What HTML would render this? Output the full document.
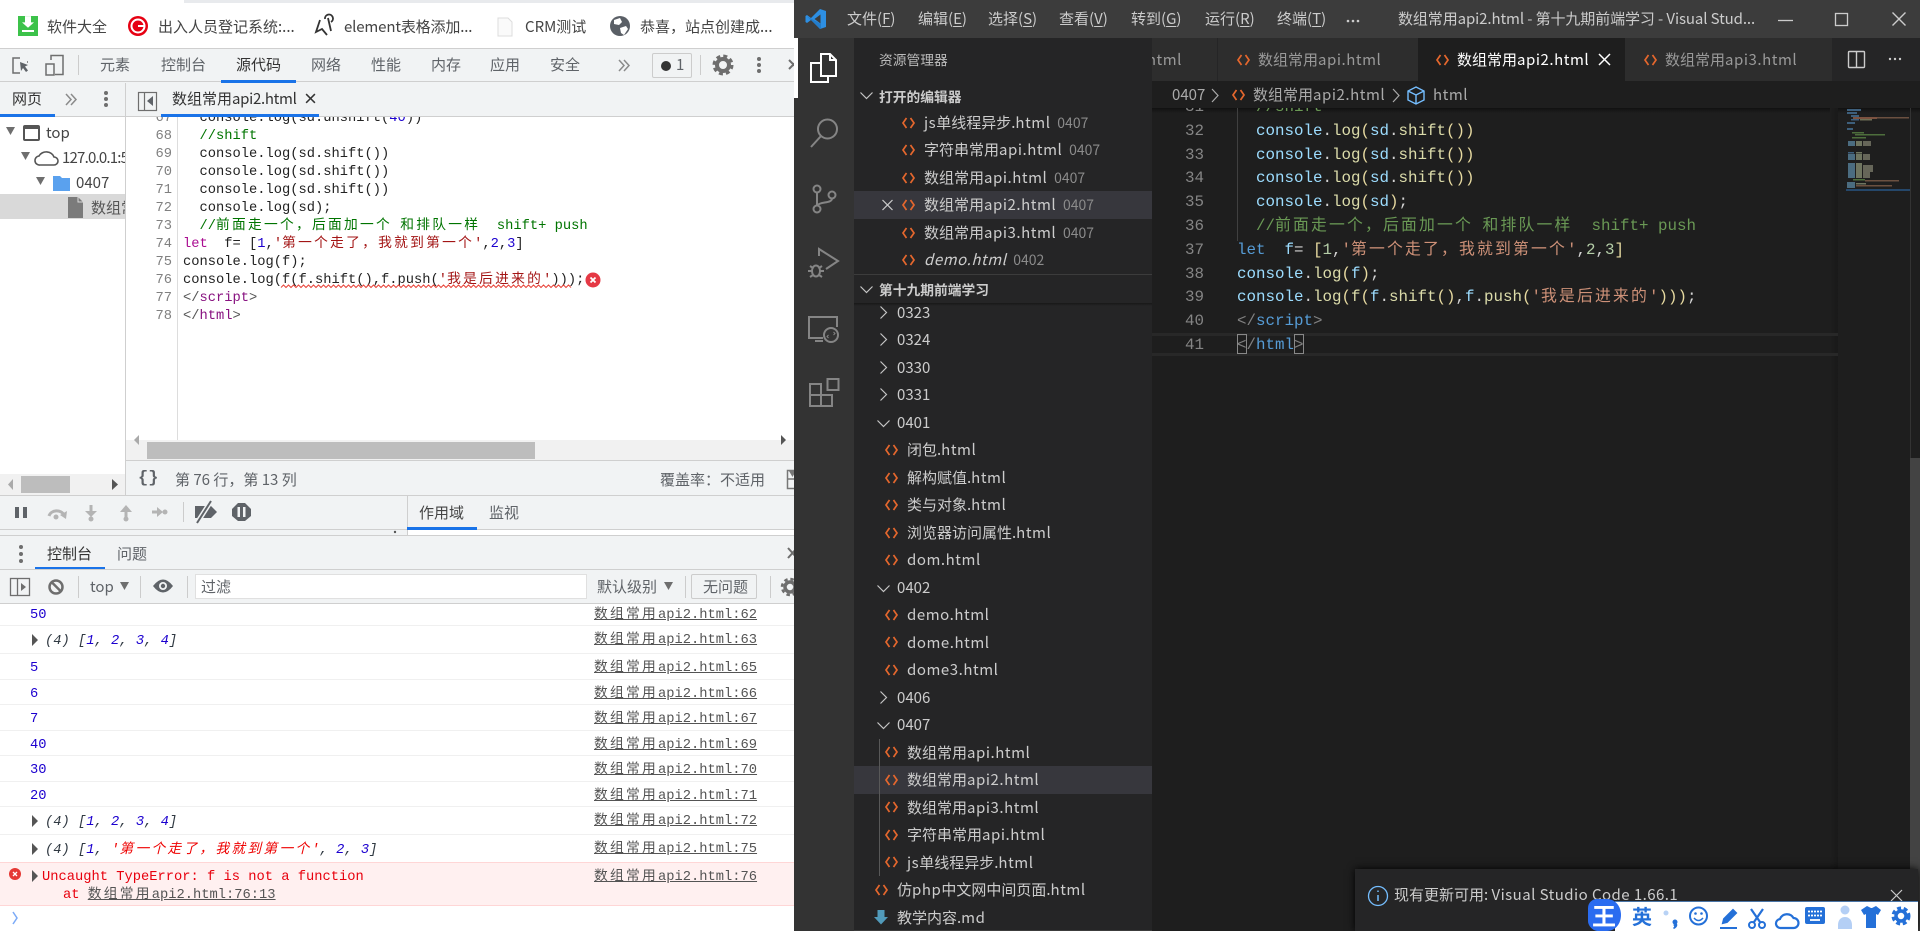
<!DOCTYPE html>
<html lang="zh"><head><meta charset="utf-8"><title>VS Code</title>
<style>
html,body{margin:0;padding:0;width:1920px;height:931px;overflow:hidden;background:#fff}
body{position:relative;font-family:"Liberation Sans","Noto Sans CJK SC",sans-serif;font-size:15px}
div,span.a{position:absolute}
.b{position:absolute}
.t{position:absolute;white-space:pre;line-height:20px;font-family:"Noto Sans CJK SC","Liberation Sans",sans-serif;font-size:15px;color:#5f6368}
.k{color:#444}
#ch{left:0;top:0;width:794px;height:931px;overflow:hidden;background:#fff}
#vs{left:0;top:0;width:1920px;height:931px;overflow:hidden}
.m{position:absolute;white-space:pre;font-family:"Liberation Mono","Noto Sans CJK SC",monospace;font-size:13.75px;line-height:18px;height:18px;color:#222;transform:translateY(2px)}
.m i{font-style:normal;letter-spacing:2.25px}
.cm{color:#007400}.kw{color:#aa0d91}.st{color:#a31515}.nu{color:#1c00cf}.tg{color:#881280}.br{color:#555}
.ln{color:#808080;width:40px;left:132px;text-align:right}
.n{color:#1c00cf}
.it{font-style:italic;color:#303942}
.it i{font-style:italic}
.lk{left:594px;color:#545454;text-decoration:underline}
.rl{position:absolute;left:0;width:794px;height:1px;background:#f0f0f0}
.s{position:absolute;white-space:pre;line-height:20px;font-family:"Noto Sans CJK SC","Liberation Sans",sans-serif;font-size:15px;color:#ccc}
.s b{font-weight:400;letter-spacing:.55px}
.g{color:#8b8b8b;font-size:14px}
.e{position:absolute;white-space:pre;font-family:"Liberation Mono","Noto Sans CJK SC",monospace;font-size:15.83px;line-height:24px;height:24px;color:#d4d4d4;transform:translateY(1px)}
.e i{font-style:normal;letter-spacing:2.17px}
.v{color:#9cdcfe}.f{color:#dcdcaa}.p{color:#e6d9a0}.c{color:#6a9955}.q{color:#ce9178}.w{color:#569cd6}.d{color:#b5cea8}.h{color:#808080}
.en{width:40px;left:1164px;text-align:right;color:#858585}
u{text-underline-offset:2px}
</style></head><body>

<div id="ch">
<div style="left:184px;top:0;width:610px;height:3px;background:#e8eaed"></div>
<div style="left:0;top:48px;width:794px;height:34px;background:#f1f3f4;border-top:1px solid #cfcfcf;border-bottom:1px solid #cfcfcf;box-sizing:border-box"></div>
<div style="left:0;top:82px;width:794px;height:35px;background:#f1f3f4;border-bottom:1px solid #cfcfcf;box-sizing:border-box"></div>

<span class="t k" style="left:47px;top:17px">软件大全</span>
<span class="t k" style="left:158px;top:17px">出入人员登记系统:...</span>
<span class="t k" style="left:344px;top:17px;letter-spacing:-.15px">element表格添加...</span>
<span class="t k" style="left:525px;top:17px">CRM测试</span>
<span class="t k" style="left:640px;top:17px">恭喜，站点创建成...</span>

<span class="t" style="left:100px;top:55px">元素</span>
<span class="t" style="left:161px;top:55px">控制台</span>
<span class="t" style="left:236px;top:55px;color:#333">源代码</span>
<span class="t" style="left:311px;top:55px">网络</span>
<span class="t" style="left:371px;top:55px">性能</span>
<span class="t" style="left:431px;top:55px">内存</span>
<span class="t" style="left:490px;top:55px">应用</span>
<span class="t" style="left:550px;top:55px">安全</span>
<div style="left:221px;top:80px;width:75px;height:3px;background:#1a73e8"></div>
<div style="left:652px;top:53px;width:40px;height:25px;border:1px solid #ccc;border-radius:2px;box-sizing:border-box"></div>
<span class="t" style="left:676px;top:55px">1</span>

<span class="t" style="left:12px;top:89px;color:#333">网页</span>
<div style="left:0;top:114px;width:55px;height:3px;background:#1a73e8"></div>
<span class="t" style="left:172px;top:89px;color:#333">数组常用<span style="letter-spacing:-.3px">api2.html</span></span>
<span class="t" style="left:303px;top:89px;color:#333;font-weight:700">×</span>
<div style="left:161px;top:114px;width:158px;height:3px;background:#1a73e8"></div>

<div style="left:125px;top:83px;width:1px;height:412px;background:#cfcfcf"></div>
<div style="left:177px;top:117px;width:1px;height:323px;background:#ddd"></div>
<div style="left:0;top:194px;width:125px;height:25px;background:#d9d9d9"></div>
<div style="left:0;top:117px;width:125px;height:140px;overflow:hidden">
<span class="t" style="left:46px;top:6px;color:#444">top</span>
<span class="t" style="left:62px;top:31px;color:#444;letter-spacing:-.8px">127.0.0.1:5500</span>
<span class="t" style="left:76px;top:56px;color:#444">0407</span>
<span class="t" style="left:91px;top:81px;color:#555">数组常用api2.html</span>
</div>

<div style="left:126px;top:117px;width:668px;height:323px;overflow:hidden">
<div class="m ln" style="left:6px;top:-9px">67</div>
<div class="m ln" style="left:6px;top:9px">68</div>
<div class="m ln" style="left:6px;top:27px">69</div>
<div class="m ln" style="left:6px;top:45px">70</div>
<div class="m ln" style="left:6px;top:63px">71</div>
<div class="m ln" style="left:6px;top:81px">72</div>
<div class="m ln" style="left:6px;top:99px">73</div>
<div class="m ln" style="left:6px;top:117px">74</div>
<div class="m ln" style="left:6px;top:135px">75</div>
<div class="m ln" style="left:6px;top:153px">76</div>
<div class="m ln" style="left:6px;top:171px">77</div>
<div class="m ln" style="left:6px;top:189px">78</div>
<div class="m" style="left:57px;top:-9px">  console.log(sd.unshift(<span class="nu">40</span>))</div>
<div class="m cm" style="left:57px;top:9px">  //shift</div>
<div class="m" style="left:57px;top:27px">  console.log(sd.shift())</div>
<div class="m" style="left:57px;top:45px">  console.log(sd.shift())</div>
<div class="m" style="left:57px;top:63px">  console.log(sd.shift())</div>
<div class="m" style="left:57px;top:81px">  console.log(sd);</div>
<div class="m cm" style="left:57px;top:99px">  //<i>前面走一个，后面加一个</i> <i>和排队一样</i>  shift+ push</div>
<div class="m" style="left:57px;top:117px"><span class="kw">let</span>  f= [<span class="nu">1</span>,<span class="st">'<i>第一个走了，我就到第一个</i>'</span>,<span class="nu">2</span>,<span class="nu">3</span>]</div>
<div class="m" style="left:57px;top:135px">console.log(f);</div>
<div class="m" style="left:57px;top:153px">console.log(f(f.shift(),f.push(<span class="st">'<i>我是后进来的</i>'</span>)));</div>
<div class="m" style="left:57px;top:171px"><span class="br">&lt;/</span><span class="tg">script</span><span class="br">&gt;</span></div>
<div class="m" style="left:57px;top:189px"><span class="br">&lt;/</span><span class="tg">html</span><span class="br">&gt;</span></div>
</div>

<div style="left:126px;top:440px;width:668px;height:21px;background:#f1f1f1;border-bottom:1px solid #cfcfcf;box-sizing:border-box"></div>
<div style="left:147px;top:442px;width:388px;height:17px;background:#bdbdbd"></div>
<div style="left:0;top:474px;width:125px;height:21px;background:#f1f1f1"></div>
<div style="left:21px;top:476px;width:49px;height:17px;background:#bdbdbd"></div>
<div style="left:126px;top:461px;width:668px;height:34px;background:#f1f3f4"></div>
<span class="t" style="left:138px;top:469px;font-family:'Liberation Mono',monospace;font-weight:700;font-size:17px">{}</span>
<span class="t" style="left:175px;top:470px">第 76 行，第 13 列</span>
<span class="t" style="left:660px;top:470px">覆盖率：不适用</span>
<div style="left:0;top:495px;width:794px;height:1px;background:#cfcfcf"></div>

<div style="left:0;top:496px;width:407px;height:40px;background:#f1f3f4"></div>
<div style="left:407px;top:496px;width:387px;height:33px;background:#f1f3f4"></div>
<div style="left:0;top:529px;width:794px;height:1px;background:#cfcfcf"></div>
<div style="left:407px;top:496px;width:1px;height:40px;background:#cfcfcf"></div>
<div style="left:408px;top:530px;width:386px;height:5px;background:#fff"></div>
<div style="left:0;top:535px;width:794px;height:1px;background:#cfcfcf"></div>
<span class="t" style="left:419px;top:503px;color:#444">作用域</span>
<span class="t" style="left:489px;top:503px">监视</span>
<div style="left:407px;top:527px;width:70px;height:3px;background:#1a73e8"></div>

<div style="left:0;top:536px;width:794px;height:33px;background:#f1f3f4"></div>
<div style="left:0;top:569px;width:794px;height:1px;background:#cfcfcf"></div>
<span class="t" style="left:47px;top:544px;color:#333">控制台</span>
<span class="t" style="left:117px;top:544px">问题</span>
<div style="left:35px;top:567px;width:70px;height:2px;background:#1a73e8"></div>
<div style="left:0;top:570px;width:794px;height:33px;background:#f1f3f4"></div>
<div style="left:0;top:603px;width:794px;height:1px;background:#cfcfcf"></div>
<div style="left:195px;top:574px;width:392px;height:25px;background:#fff;border:1px solid #e0e0e0;box-sizing:border-box"></div>
<span class="t" style="left:201px;top:577px">过滤</span>
<span class="t" style="left:90px;top:577px">top</span>
<span class="t" style="left:597px;top:577px">默认级别</span>
<div style="left:691px;top:574px;width:66px;height:25px;border:1px solid #ccc;border-radius:2px;box-sizing:border-box"></div>
<span class="t" style="left:703px;top:577px">无问题</span>

<div class="rl" style="top:625px"></div><div class="rl" style="top:653px"></div><div class="rl" style="top:679px"></div><div class="rl" style="top:704px"></div><div class="rl" style="top:730px"></div><div class="rl" style="top:755px"></div><div class="rl" style="top:781px"></div><div class="rl" style="top:806px"></div><div class="rl" style="top:834px"></div>
<div class="m n" style="left:30px;top:605px">50</div>
<div class="m it" style="left:45px;top:631px">(4) [<span class="n">1</span>, <span class="n">2</span>, <span class="n">3</span>, <span class="n">4</span>]</div>
<div class="m n" style="left:30px;top:658px">5</div>
<div class="m n" style="left:30px;top:684px">6</div>
<div class="m n" style="left:30px;top:709px">7</div>
<div class="m n" style="left:30px;top:735px">40</div>
<div class="m n" style="left:30px;top:760px">30</div>
<div class="m n" style="left:30px;top:786px">20</div>
<div class="m it" style="left:45px;top:812px">(4) [<span class="n">1</span>, <span class="n">2</span>, <span class="n">3</span>, <span class="n">4</span>]</div>
<div class="m it" style="left:45px;top:840px">(4) [<span class="n">1</span>, <span style="color:#e00">'<i>第一个走了，我就到第一个</i>'</span>, <span class="n">2</span>, <span class="n">3</span>]</div>
<div style="left:0;top:862px;width:794px;height:44px;background:#fff0f0;border-top:1px solid #ffd6d6;border-bottom:1px solid #ffd6d6;box-sizing:border-box"></div>
<div class="m" style="left:42px;top:867px;color:#e8000d">Uncaught TypeError: f is not a function</div>
<div class="m" style="left:63px;top:885px;color:#e8000d">at <span style="color:#545454;text-decoration:underline"><i>数组常用</i>api2.html:76:13</span></div>
<div class="m lk" style="top:605px"><i>数组常用</i>api2.html:62</div>
<div class="m lk" style="top:630px"><i>数组常用</i>api2.html:63</div>
<div class="m lk" style="top:658px"><i>数组常用</i>api2.html:65</div>
<div class="m lk" style="top:684px"><i>数组常用</i>api2.html:66</div>
<div class="m lk" style="top:709px"><i>数组常用</i>api2.html:67</div>
<div class="m lk" style="top:735px"><i>数组常用</i>api2.html:69</div>
<div class="m lk" style="top:760px"><i>数组常用</i>api2.html:70</div>
<div class="m lk" style="top:786px"><i>数组常用</i>api2.html:71</div>
<div class="m lk" style="top:811px"><i>数组常用</i>api2.html:72</div>
<div class="m lk" style="top:839px"><i>数组常用</i>api2.html:75</div>
<div class="m lk" style="top:867px"><i>数组常用</i>api2.html:76</div>

<svg class="b" style="left:0;top:0" width="794" height="931" fill="none">
<rect x="18" y="16" width="20" height="20" fill="#3cc24a"/><path d="M25 19h6v7h3l-6 6-6-6h3z" fill="#fff" transform="translate(0 -1) scale(1 .9)"/><rect x="22" y="30" width="12" height="2" fill="#fff"/>
<circle cx="138" cy="26" r="10" fill="#e60012"/><circle cx="138" cy="26" r="6.500" stroke="#fff" stroke-width="2"/><path d="M138 26h6" stroke="#fff" stroke-width="2"/>
<path d="M320 20l-4 12 6-3 5 6M328 18l3 13M325 19a4 4 0 1 1 6 3" stroke="#333" stroke-width="1.800"/>
<path d="M498 18h10l4 4v14h-14z" fill="#fafafa" stroke="#ddd"/>
<circle cx="620" cy="26" r="10" fill="#5a5f66"/><path d="M614 20l6-2 2 4-3 3-5-1zM620 28l6-2 2 3-4 6-3-2z" fill="#fff"/>
<path d="M20 58h-7v15h7" stroke="#6e6e6e" stroke-width="1.500"/><path d="M28 62h-1" stroke="#6e6e6e" stroke-width="1.500"/><path d="M20 62l8 3-3 1.500 3 4-2 1.500-3-4-2 3z" fill="#5f6368"/>
<rect x="46" y="64" width="8" height="11" stroke="#6e6e6e" stroke-width="1.500"/><path d="M51 60v-4.500h12v19h-8" stroke="#6e6e6e" stroke-width="1.500"/>
<path d="M78.500 55v20M700.500 55v20" stroke="#ccc"/>
<path d="M619 60l5 5.500-5 5.500M624 60l5 5.500-5 5.500M66 94l5 5.500-5 5.500M71 94l5 5.500-5 5.500" stroke="#8a8a8a" stroke-width="1.500"/>
<circle cx="666" cy="66" r="5" fill="#333"/>
<g transform="translate(723 65)"><circle r="6" stroke="#6e6e6e" stroke-width="4"/><circle r="9" stroke="#6e6e6e" stroke-width="3" stroke-dasharray="4 3.070"/></g>
<g fill="#6e6e6e"><circle cx="759" cy="59" r="2"/><circle cx="759" cy="65" r="2"/><circle cx="759" cy="71" r="2"/>
<circle cx="106" cy="93" r="2"/><circle cx="106" cy="99" r="2"/><circle cx="106" cy="105" r="2"/>
<circle cx="21" cy="547" r="2"/><circle cx="21" cy="554" r="2"/><circle cx="21" cy="561" r="2"/></g>
<path d="M789 60l9 9M798 60l-9 9M788 548l9 10M797 548l-9 10" stroke="#6e6e6e" stroke-width="2"/>
<rect x="138.500" y="92.500" width="18" height="18" stroke="#6e6e6e" stroke-width="1.200"/><path d="M144.500 92v18" stroke="#6e6e6e" stroke-width="1.200"/><path d="M153 96v10l-6-5z" fill="#5f6368"/>

<path d="M6 127h9l-4.500 8zM21 152h9l-4.500 8zM36 177h9l-4.500 8z" fill="#6e6e6e"/>
<rect x="24" y="126" width="15" height="14" rx="1" stroke="#555" stroke-width="2"/><path d="M24 128h15" stroke="#555" stroke-width="2"/>
<path d="M40 165a4.500 4.500 0 0 1-1-9 8 7 0 0 1 15 1 4 4 0 0 1 0 8z" stroke="#555" stroke-width="1.600"/>
<path d="M53 176h7l2 2h8v13h-17z" fill="#5aa1ee"/>
<path d="M68 197h10l5 5v16h-15z" fill="#7b7b7b"/><path d="M78 197v5h5" stroke="#d9d9d9"/>

<path d="M139 445v-10l-5 5z" fill="#aaa"/><path d="M781 435v10l5-5z" fill="#555"/>
<path d="M13 479v11l-5-5.500z" fill="#aaa"/><path d="M112 479v11l6-5.500z" fill="#555"/>
<rect x="787.500" y="470.500" width="9" height="18" stroke="#777" stroke-width="1.500"/><path d="M787 479h8" stroke="#777" stroke-width="1.500"/><path d="M789 471h7l-3.500 6z" fill="#777"/>

<rect x="15" y="507" width="4" height="11" fill="#5f6368"/><rect x="23" y="507" width="4" height="11" fill="#5f6368"/>
<path d="M49 516a8 7 0 0 1 15-1" stroke="#b4b4b4" stroke-width="3"/><path d="M67 511l-1 8-6-4z" fill="#b4b4b4"/><circle cx="56" cy="517" r="2.500" fill="#b4b4b4"/>
<path d="M91 505v9" stroke="#b4b4b4" stroke-width="3"/><path d="M85 511h12l-6 6z" fill="#b4b4b4"/><circle cx="91" cy="519" r="2.500" fill="#b4b4b4"/>
<path d="M126 509v9" stroke="#b4b4b4" stroke-width="3"/><path d="M120 512h12l-6-7z" fill="#b4b4b4"/><circle cx="126" cy="519" r="2.500" fill="#b4b4b4"/>
<path d="M152 512h7" stroke="#b4b4b4" stroke-width="3"/><path d="M157 507l6 5-6 5z" fill="#b4b4b4"/><circle cx="165" cy="512" r="2.500" fill="#b4b4b4"/>
<path d="M183.500 502v20" stroke="#ccc"/>
<path d="M195 506h16l6 6-6 6h-16z" fill="#5f6368"/><path d="M211 501l-14 22" stroke="#f1f3f4" stroke-width="5"/><path d="M211 501l-14 22" stroke="#5f6368" stroke-width="2"/>
<path d="M238 503h7l6 6v7l-6 5h-7l-6-5v-7z" fill="#5f6368"/><rect x="237.500" y="507" width="2.500" height="10" fill="#f1f3f4"/><rect x="243" y="507" width="2.500" height="10" fill="#f1f3f4"/>
<circle cx="395" cy="532" r="1.200" fill="#555"/>

<rect x="10.500" y="578.500" width="19" height="17" stroke="#6e6e6e" stroke-width="1.300"/><path d="M17.500 578v18" stroke="#6e6e6e" stroke-width="1.300"/><path d="M21 583v8l5-4z" fill="#6e6e6e"/>
<circle cx="56" cy="587" r="6.500" stroke="#6e6e6e" stroke-width="2.500"/><path d="M51.500 582l9 9" stroke="#6e6e6e" stroke-width="2.500"/>
<path d="M78.500 576v22M140.500 576v22M187.500 576v22M685.500 576v22M770.500 576v22" stroke="#ccc"/>
<path d="M120 582h9l-4.500 8zM664 582h9l-4.500 8z" fill="#6e6e6e"/>
<path d="M153 586q10-13 20 0q-10 13-20 0z" fill="#5f6368"/><circle cx="163" cy="586" r="4" fill="#f1f3f4"/><circle cx="163" cy="586" r="2.200" fill="#5f6368"/>
<g transform="translate(790 587)"><circle r="5" stroke="#6e6e6e" stroke-width="3.500"/><circle r="8" stroke="#6e6e6e" stroke-width="2.500" stroke-dasharray="3.500 2.800"/></g>

<path d="M32 634v12l6-6zM32 815v12l6-6zM32 843v12l6-6zM32 870v12l6-6z" fill="#555"/>
<circle cx="15" cy="874" r="6" fill="#e53935"/><path d="M13 872l4 4M17 872l-4 4" stroke="#fff" stroke-width="1.300"/>
<path d="M13 912l4 6-4 6" stroke="#7baaf7" stroke-width="1.500"/>

<path d="M281 287.500l2.500-2.500 2.500 2.500 2.500-2.500 2.500 2.500 2.500-2.500 2.500 2.500 2.500-2.500 2.500 2.500 2.500-2.500 2.500 2.500 2.500-2.500 2.500 2.500 2.500-2.500 2.500 2.500 2.500-2.500 2.500 2.500 2.500-2.500 2.500 2.500 2.500-2.500 2.500 2.500 2.500-2.500 2.500 2.500 2.500-2.500 2.500 2.500 2.500-2.500 2.500 2.500 2.500-2.500 2.500 2.500 2.500-2.500 2.500 2.500 2.500-2.500 2.500 2.500 2.500-2.500 2.500 2.500 2.500-2.500 2.500 2.500 2.500-2.500 2.500 2.500 2.500-2.500 2.500 2.500 2.500-2.500 2.500 2.500 2.500-2.500 2.500 2.500 2.500-2.500 2.500 2.500 2.500-2.500 2.500 2.500 2.500-2.500 2.500 2.500 2.500-2.500 2.500 2.500 2.500-2.500 2.500 2.500 2.500-2.500 2.500 2.500 2.500-2.500 2.500 2.500 2.500-2.500 2.500 2.500 2.500-2.500 2.500 2.500 2.500-2.500 2.500 2.500 2.500-2.500 2.500 2.500 2.500-2.500 2.500 2.500 2.500-2.500 2.500 2.500 2.500-2.500 2.500 2.500 2.500-2.500 2.500 2.500 2.500-2.500 2.500 2.500 2.500-2.500 2.500 2.500 2.500-2.500 2.500 2.500 2.500-2.500 2.500 2.500 2.500-2.500 2.500 2.500 2.500-2.500 2.500 2.500 2.500-2.500 2.500 2.500 2.500-2.500 2.500 2.500 2.500-2.500 2.500 2.500 2.500-2.500 2.500 2.500 2.500-2.500 2.500 2.500 2.500-2.500 2.500 2.500 2.500-2.500 2.500 2.500 2.500-2.500 2.500 2.500 2.500-2.500 2.500 2.500 2.500-2.500 2.500 2.500 2.500-2.500 2.500 2.500 2.500-2.500 2.500 2.500 2.500-2.500 2.500 2.500 2.500-2.500 2.500 2.500 2.500-2.500 2.500 2.500" stroke="#e8443a" stroke-width="1"/>
<circle cx="593" cy="280" r="7.500" fill="#e53945"/><path d="M590.500 277.500l5 5M595.500 277.500l-5 5" stroke="#fff" stroke-width="1.800"/>
</svg>
</div>

<div id="vs">
<div style="left:794px;top:98px;width:4px;height:833px;background:#333"></div>
<div style="left:794px;top:38px;width:4px;height:60px;background:#fff"></div>
<div style="left:794px;top:0;width:1126px;height:38px;background:#3c3c3c"></div>
<div style="left:798px;top:38px;width:56px;height:893px;background:#333"></div>
<div style="left:854px;top:38px;width:298px;height:893px;background:#252526"></div>
<div style="left:1152px;top:38px;width:768px;height:43px;background:#252526"></div>
<div style="left:1152px;top:38px;width:65px;height:43px;background:#2d2d2d"></div>
<div style="left:1218px;top:38px;width:200px;height:43px;background:#2d2d2d"></div>
<div style="left:1418px;top:38px;width:207px;height:43px;background:#1e1e1e"></div>
<div style="left:1625px;top:38px;width:207px;height:43px;background:#2d2d2d"></div>
<div style="left:1152px;top:81px;width:768px;height:850px;background:#1e1e1e"></div>
<div style="left:1152px;top:108px;width:768px;height:5px;background:linear-gradient(#111,#1e1e1e)"></div>
<div style="left:1830px;top:108px;width:8px;height:823px;background:linear-gradient(90deg,#1e1e1e,#191919)"></div>
<div style="left:1152px;top:333px;width:686px;height:3px;background:#282828"></div>
<div style="left:1152px;top:353px;width:686px;height:3px;background:#282828"></div>
<div style="left:1910px;top:108px;width:1px;height:350px;background:#333"></div>
<div style="left:1910px;top:458px;width:10px;height:473px;background:#434343"></div>

<span class="s" style="left:847px;top:9px">文件(<u>F</u>)</span>
<span class="s" style="left:918px;top:9px">编辑(<u>E</u>)</span>
<span class="s" style="left:988px;top:9px">选择(<u>S</u>)</span>
<span class="s" style="left:1059px;top:9px">查看(<u>V</u>)</span>
<span class="s" style="left:1131px;top:9px">转到(<u>G</u>)</span>
<span class="s" style="left:1205px;top:9px">运行(<u>R</u>)</span>
<span class="s" style="left:1277px;top:9px">终端(<u>T</u>)</span>
<span class="s" style="left:1398px;top:9px;letter-spacing:-.1px">数组常用api2.html - 第十九期前端学习 - Visual Stud...</span>

<span class="s" style="left:879px;top:49px;font-size:13.750px;color:#bbb">资源管理器</span>
<span class="s" style="left:879px;top:86px;font-size:13.750px;font-weight:700">打开的编辑器</span>
<span class="s" style="left:924px;top:113px"><b>js</b>单线程异步.<b>html</b>  <span class="g">0407</span></span>
<span class="s" style="left:924px;top:140px">字符串常用<b>api.html</b>  <span class="g">0407</span></span>
<div style="left:854px;top:191px;width:298px;height:28px;background:#37373d"></div>
<span class="s" style="left:924px;top:168px">数组常用<b>api.html</b>  <span class="g">0407</span></span>
<span class="s" style="left:924px;top:195px">数组常用<b>api2.html</b>  <span class="g">0407</span></span>
<span class="s" style="left:924px;top:223px">数组常用<b>api3.html</b>  <span class="g">0407</span></span>
<span class="s" style="left:924px;top:250px;font-style:italic"><b>demo.html</b>  <span class="g" style="font-style:normal">0402</span></span>
<div style="left:854px;top:274px;width:298px;height:1px;background:#3c3c3c"></div>
<span class="s" style="left:879px;top:279px;font-size:13.750px;font-weight:700">第十九期前端学习</span>
<div style="left:854px;top:303px;width:298px;height:3px;background:linear-gradient(#181818,#252526)"></div>

<span class="s" style="left:897px;top:303px">0323</span>
<span class="s" style="left:897px;top:330px">0324</span>
<span class="s" style="left:897px;top:358px">0330</span>
<span class="s" style="left:897px;top:385px">0331</span>
<span class="s" style="left:897px;top:413px">0401</span>
<span class="s" style="left:907px;top:440px">闭包.<b>html</b></span>
<span class="s" style="left:907px;top:468px">解构赋值.<b>html</b></span>
<span class="s" style="left:907px;top:495px">类与对象.<b>html</b></span>
<span class="s" style="left:907px;top:523px">浏览器访问属性.<b>html</b></span>
<span class="s" style="left:907px;top:550px"><b>dom.html</b></span>
<span class="s" style="left:897px;top:578px">0402</span>
<span class="s" style="left:907px;top:605px"><b>demo.html</b></span>
<span class="s" style="left:907px;top:633px"><b>dome.html</b></span>
<span class="s" style="left:907px;top:660px"><b>dome3.html</b></span>
<span class="s" style="left:897px;top:688px">0406</span>
<span class="s" style="left:897px;top:715px">0407</span>
<div style="left:854px;top:766px;width:298px;height:28px;background:#37373d"></div>
<span class="s" style="left:907px;top:743px">数组常用<b>api.html</b></span>
<span class="s" style="left:907px;top:770px">数组常用<b>api2.html</b></span>
<span class="s" style="left:907px;top:798px">数组常用<b>api3.html</b></span>
<span class="s" style="left:907px;top:825px">字符串常用<b>api.html</b></span>
<span class="s" style="left:907px;top:853px"><b>js</b>单线程异步.<b>html</b></span>
<span class="s" style="left:897px;top:880px">仿<b>php</b>中文网中间页面.<b>html</b></span>
<span class="s" style="left:897px;top:908px">教学内容.<b>md</b></span>
<div style="left:879px;top:739px;width:1px;height:137px;background:#585858"></div>
<div style="left:854px;top:930px;width:298px;height:1px;background:#3c3c3c"></div>

<span class="s" style="left:1152px;top:50px;color:#999;overflow:hidden;width:30px;direction:rtl"><b>html</b></span>
<span class="s" style="left:1258px;top:50px;color:#999">数组常用<b>api.html</b></span>
<span class="s" style="left:1457px;top:50px;color:#fff">数组常用<b>api2.html</b></span>
<span class="s" style="left:1665px;top:50px;color:#999">数组常用<b>api3.html</b></span>
<span class="s" style="left:1172px;top:85px;color:#aaa">0407</span>
<span class="s" style="left:1253px;top:85px;color:#aaa">数组常用<b>api2.html</b></span>
<span class="s" style="left:1433px;top:85px;color:#aaa"><b>html</b></span>

<div style="left:1152px;top:108px;width:686px;height:250px;overflow:hidden">
<div class="e en" style="left:12px;top:-14px">31</div>
<div class="e en" style="left:12px;top:10px">32</div>
<div class="e en" style="left:12px;top:34px">33</div>
<div class="e en" style="left:12px;top:57px">34</div>
<div class="e en" style="left:12px;top:81px">35</div>
<div class="e en" style="left:12px;top:105px">36</div>
<div class="e en" style="left:12px;top:129px">37</div>
<div class="e en" style="left:12px;top:153px">38</div>
<div class="e en" style="left:12px;top:176px">39</div>
<div class="e en" style="left:12px;top:200px">40</div>
<div class="e en" style="left:12px;top:224px">41</div>
<div class="e c" style="left:85px;top:-14px">  //shift</div>
<div class="e" style="left:85px;top:10px">  <span class="v">console</span>.<span class="f">log</span><span class="p">(</span><span class="v">sd</span>.<span class="f">shift</span><span class="p">())</span></div>
<div class="e" style="left:85px;top:34px">  <span class="v">console</span>.<span class="f">log</span><span class="p">(</span><span class="v">sd</span>.<span class="f">shift</span><span class="p">())</span></div>
<div class="e" style="left:85px;top:57px">  <span class="v">console</span>.<span class="f">log</span><span class="p">(</span><span class="v">sd</span>.<span class="f">shift</span><span class="p">())</span></div>
<div class="e" style="left:85px;top:81px">  <span class="v">console</span>.<span class="f">log</span><span class="p">(</span><span class="v">sd</span><span class="p">)</span>;</div>
<div class="e c" style="left:85px;top:105px">  //<i>前面走一个，后面加一个</i> <i>和排队一样</i>  shift+ push</div>
<div class="e" style="left:85px;top:129px"><span class="w">let</span>  <span class="v">f</span>= <span class="p">[</span><span class="d">1</span>,<span class="q">'<i>第一个走了，我就到第一个</i>'</span>,<span class="d">2</span>,<span class="d">3</span><span class="p">]</span></div>
<div class="e" style="left:85px;top:153px"><span class="v">console</span>.<span class="f">log</span><span class="p">(</span><span class="v">f</span><span class="p">)</span>;</div>
<div class="e" style="left:85px;top:176px"><span class="v">console</span>.<span class="f">log</span><span class="p">(</span><span class="f">f</span><span class="p">(</span><span class="v">f</span>.<span class="f">shift</span><span class="p">()</span>,<span class="v">f</span>.<span class="f">push</span><span class="p">(</span><span class="q">'<i>我是后进来的</i>'</span><span class="p">)))</span>;</div>
<div class="e" style="left:85px;top:200px"><span class="h">&lt;/</span><span class="w">script</span><span class="h">&gt;</span></div>
<div class="e" style="left:85px;top:224px"><span class="h">&lt;/</span><span class="w">html</span><span class="h">&gt;</span></div>
</div>
<div style="left:1237px;top:108px;width:1px;height:133px;background:#404040"></div>
<div style="left:1237px;top:334px;width:10px;height:20px;border:1px solid #888;box-sizing:border-box"></div>
<div style="left:1294px;top:334px;width:10px;height:20px;border:1px solid #888;box-sizing:border-box"></div>

<svg class="b" style="left:0;top:0" width="1920" height="931" fill="none">
<defs>
<symbol id="h" viewBox="0 0 13 12" overflow="visible"><path d="M4.500 1L1 6l3.500 5M8.500 1L12 6l-3.500 5" stroke="#e5672d" stroke-width="1.700" fill="none"/></symbol>
<symbol id="cd" viewBox="0 0 13 7" overflow="visible"><path d="M.5.5L6.500 6.500 12.500.5" stroke="#c5c5c5" stroke-width="1.200" fill="none"/></symbol>
<symbol id="cr" viewBox="0 0 7 13" overflow="visible"><path d="M.5.5L6.500 6.500 .5 12.500" stroke="#c5c5c5" stroke-width="1.200" fill="none"/></symbol>
</defs>
<path d="M820 9l-9 9-4-3-1.500 1v6l1.500 1 4-3 9 9 6-2V11z" fill="#2d8fe3"/><path d="M820.500 14.500l-6 4.500 6 4.500z" fill="#3c3c3c"/>
<path d="M807 16.500l13 12 1 .5V24z" fill="#1f74bf" opacity=".7"/>
<g fill="#ccc"><circle cx="1348" cy="21" r="1.300"/><circle cx="1353" cy="21" r="1.300"/><circle cx="1358" cy="21" r="1.300"/></g>
<path d="M1778 20.500h15" stroke="#ccc" stroke-width="1.300"/><rect x="1835.500" y="13.500" width="12" height="12" stroke="#ccc" stroke-width="1.300"/><path d="M1892.500 12.500l13 13M1905.500 12.500l-13 13" stroke="#ccc" stroke-width="1.400"/>

<path d="M821 54h9l6 6v16h-15zM830 54v6h6M821 63h-10v19h17v-6" stroke="#fff" stroke-width="2"/>
<g stroke="#858585" stroke-width="2"><circle cx="827.500" cy="129" r="9.500"/><path d="M821 136l-10 11"/>
<circle cx="817" cy="189" r="3.500"/><circle cx="817" cy="209" r="3.500"/><circle cx="832" cy="195" r="3.500"/><path d="M817 192.500v13M832 198.500c0 5-12 3-15 7"/>
<path d="M819 256v-7l19 12-12 8"/><ellipse cx="816" cy="271" rx="4" ry="5.500"/><path d="M810 266l3 2M822 266l-3 2M808 271h4M820 271h4M810 277l3-2M822 277l-3-2"/>
<path d="M823 338h-14v-21h28v10M815 341h8"/><circle cx="831" cy="335" r="7"/>
<path d="M810 384h11v11h11v11h-22zM810 395h11v11"/><rect x="827.500" y="379" width="11" height="11"/></g>
<path d="M828.500 335l-1.500 1.500 1.500 1.500M833.500 332l1.500 1.500-1.500 1.500" stroke="#858585" stroke-width="1"/>

<use href="#cd" x="860" y="92" width="13" height="7"/><use href="#cd" x="860" y="286" width="13" height="7"/>
<g><use href="#cr" x="880" y="306" width="7" height="13"/><use href="#cr" x="880" y="333" width="7" height="13"/><use href="#cr" x="880" y="361" width="7" height="13"/><use href="#cr" x="880" y="388" width="7" height="13"/><use href="#cd" x="877" y="420" width="13" height="7"/><use href="#cd" x="877" y="585" width="13" height="7"/><use href="#cr" x="880" y="691" width="7" height="13"/><use href="#cd" x="877" y="722" width="13" height="7"/></g>
<g>
<use href="#h" x="902" y="117" width="13" height="12"/><use href="#h" x="902" y="144" width="13" height="12"/><use href="#h" x="902" y="172" width="13" height="12"/><use href="#h" x="902" y="199" width="13" height="12"/><use href="#h" x="902" y="227" width="13" height="12"/><use href="#h" x="902" y="254" width="13" height="12"/>
<use href="#h" x="885" y="444" width="13" height="12"/><use href="#h" x="885" y="472" width="13" height="12"/><use href="#h" x="885" y="499" width="13" height="12"/><use href="#h" x="885" y="527" width="13" height="12"/><use href="#h" x="885" y="554" width="13" height="12"/>
<use href="#h" x="885" y="609" width="13" height="12"/><use href="#h" x="885" y="636" width="13" height="12"/><use href="#h" x="885" y="664" width="13" height="12"/>
<use href="#h" x="885" y="746" width="13" height="12"/><use href="#h" x="885" y="774" width="13" height="12"/><use href="#h" x="885" y="801" width="13" height="12"/><use href="#h" x="885" y="829" width="13" height="12"/><use href="#h" x="885" y="856" width="13" height="12"/>
<use href="#h" x="875" y="884" width="13" height="12"/>
<use href="#h" x="1237" y="54" width="13" height="12"/><use href="#h" x="1436" y="54" width="13" height="12"/><use href="#h" x="1644" y="54" width="13" height="12"/><use href="#h" x="1232" y="89" width="13" height="12"/>
</g>
<path d="M877.500 910h7v7h3.500l-7 7.500-7-7.500h3.500z" fill="#519aba"/>
<path d="M882.500 200l10 10M892.500 200l-10 10" stroke="#ccc" stroke-width="1.200"/>
<path d="M1599 54l11 11M1610 54l-11 11" stroke="#fff" stroke-width="1.500"/>
<rect x="1848.500" y="51.500" width="16" height="16" rx="1" stroke="#ccc" stroke-width="1.400"/><path d="M1856.500 51v17" stroke="#ccc" stroke-width="1.400"/>
<g fill="#ccc"><circle cx="1890" cy="59" r="1.200"/><circle cx="1895" cy="59" r="1.200"/><circle cx="1900" cy="59" r="1.200"/></g>
<path d="M1212 89l6 6.500-6 6.500M1393 89l6 6.500-6 6.500" stroke="#aaa" stroke-width="1.200"/>
<path d="M1416 87l8 4v9l-8 4-8-4v-9zM1408 91l8 4 8-4M1416 95v9" stroke="#75beff" stroke-width="1.400"/>

<rect x="1847" y="109" width="14" height="2" fill="#3d5f7c"/><rect x="1847" y="112" width="10" height="2" fill="#3d5f7c"/>
<rect x="1851" y="115" width="8" height="2" fill="#3d5f7c"/><rect x="1853" y="117" width="24" height="2" fill="#7c5240"/><rect x="1877" y="117" width="32" height="1.500" fill="#6b5040"/>
<rect x="1851" y="119" width="8" height="1.500" fill="#3d5f7c"/><rect x="1860" y="119" width="12" height="1.500" fill="#6f6f55"/>
<rect x="1847" y="122" width="8" height="2" fill="#3d5f7c"/><rect x="1847" y="128" width="6" height="2" fill="#3d5f7c"/>
<rect x="1852" y="132" width="12" height="1.500" fill="#4d6e3c"/><rect x="1855" y="134" width="18" height="1.500" fill="#4d6e3c"/><rect x="1873" y="134" width="12" height="1.500" fill="#4d6e3c"/><rect x="1852" y="137" width="14" height="1.500" fill="#4d6e3c"/>
<rect x="1848" y="141" width="7" height="5" fill="#4b6c80"/><rect x="1856" y="141" width="6" height="5" fill="#6f7560"/><rect x="1863" y="141" width="8" height="5" fill="#666659"/>
<rect x="1848" y="152" width="6" height="1.500" fill="#3d5f7c"/><rect x="1856" y="152" width="6" height="1.500" fill="#6f7560"/>
<rect x="1848" y="154" width="7" height="6" fill="#4b6c80"/><rect x="1856" y="154" width="6" height="6" fill="#6f7560"/><rect x="1863" y="154" width="7" height="6" fill="#666659"/>
<rect x="1848" y="163" width="7" height="3" fill="#4b6c80"/><rect x="1856" y="163" width="6" height="3" fill="#6f7560"/>
<rect x="1848" y="165" width="7" height="7" fill="#4b6c80"/><rect x="1856" y="165" width="6" height="7" fill="#6f7560"/><rect x="1863" y="165" width="10" height="7" fill="#666659"/>
<rect x="1848" y="171" width="7" height="7" fill="#4b6c80"/><rect x="1856" y="171" width="6" height="7" fill="#6f7560"/><rect x="1863" y="171" width="7" height="7" fill="#666659"/>
<rect x="1853" y="179" width="12" height="1.500" fill="#4d6e3c"/><rect x="1865" y="180" width="34" height="1.500" fill="#6b5040"/>
<rect x="1847" y="182" width="8" height="6" fill="#4b6c80"/><rect x="1856" y="183" width="10" height="1.500" fill="#6f7560"/><rect x="1856" y="185" width="36" height="1.500" fill="#6b5040"/>
</svg>
<div style="left:1846px;top:189px;width:64px;height:2px;background:#25476a"></div>

<div style="left:1355px;top:869px;width:563px;height:62px;background:#252526;box-shadow:0 0 8px #000"></div>
<span class="s" style="left:1394px;top:885px;color:#ccc">现有更新可用: <span style="letter-spacing:.45px">Visual Studio Code 1.66.1</span></span>
<svg class="b" style="left:0;top:0" width="1920" height="931" fill="none">
<circle cx="1378" cy="896" r="9.500" stroke="#75beff" stroke-width="1.300"/><path d="M1378 895v6M1378 890.500v1.500" stroke="#75beff" stroke-width="1.500"/>
<path d="M1891 890l11 11M1902 890l-11 11" stroke="#ccc" stroke-width="1.200"/>
<rect x="1615" y="901" width="303" height="30" fill="#fff"/><path d="M1615 901.500h303" stroke="#4a76a8"/>
<path d="M1588 908a9 9 0 0 1 9-9h10c8 0 14 7 14 16s-6 16-14 16h-9c-5 0-10-5-10-10z" fill="#2a6cf0"/>
<circle cx="1666" cy="913" r="2.500" fill="#b8d2f5"/><path d="M1676 923c2 1 2 4-2 6l-1-1c1-1 2-2 0-3z" fill="#2470d8"/><circle cx="1675" cy="922" r="2.500" fill="#2470d8"/>
<circle cx="1698.500" cy="916" r="8.500" stroke="#2470d8" stroke-width="2"/><circle cx="1695.500" cy="913.500" r="1.300" fill="#2470d8"/><circle cx="1701.500" cy="913.500" r="1.300" fill="#2470d8"/><path d="M1694 918q4.500 5 9 0" stroke="#2470d8" stroke-width="1.500"/>
<path d="M1723 923l1-4 9-9 3 3-9 9zM1720 928h17" stroke="#2470d8" stroke-width="2" fill="#2470d8"/>
<circle cx="1752" cy="925" r="3" stroke="#2470d8" stroke-width="2"/><circle cx="1762" cy="925" r="3" stroke="#2470d8" stroke-width="2"/><path d="M1754 922l9-13M1760 922l-9-13" stroke="#2470d8" stroke-width="2.200"/>
<path d="M1781 928a4.500 4.500 0 0 1-1-9 7.500 7.500 0 0 1 13.500-1 5 5 0 0 1 0 10z" stroke="#2470d8" stroke-width="2.200"/>
<rect x="1805" y="907" width="20" height="17" rx="2" fill="#2470d8"/><path d="M1808 911.500h14M1808 915.500h14" stroke="#fff" stroke-width="1.800" stroke-dasharray="2 1"/><path d="M1810 920h10" stroke="#fff" stroke-width="1.800"/>
<circle cx="1845" cy="910" r="4.500" fill="#b4cff5"/><path d="M1838 929v-4c0-5 3-8 7-8s7 3 7 8v4z" fill="#b4cff5"/>
<path d="M1867 906l4 2h1l4-2 5 4-3 5-2-1v14h-10v-14l-2 1-3-5z" fill="#2470d8"/>
<g transform="translate(1901 916)"><circle r="5" stroke="#2470d8" stroke-width="3.500"/><circle r="8" stroke="#2470d8" stroke-width="3" stroke-dasharray="4 2.700"/></g>
</svg>
<span class="s" style="left:1592px;top:903px;color:#fff;font-size:24px;line-height:24px;font-weight:700">王</span>
<span class="s" style="left:1632px;top:905px;color:#2470d8;font-size:20px;line-height:22px;font-weight:700">英</span>
</div>
</body></html>
